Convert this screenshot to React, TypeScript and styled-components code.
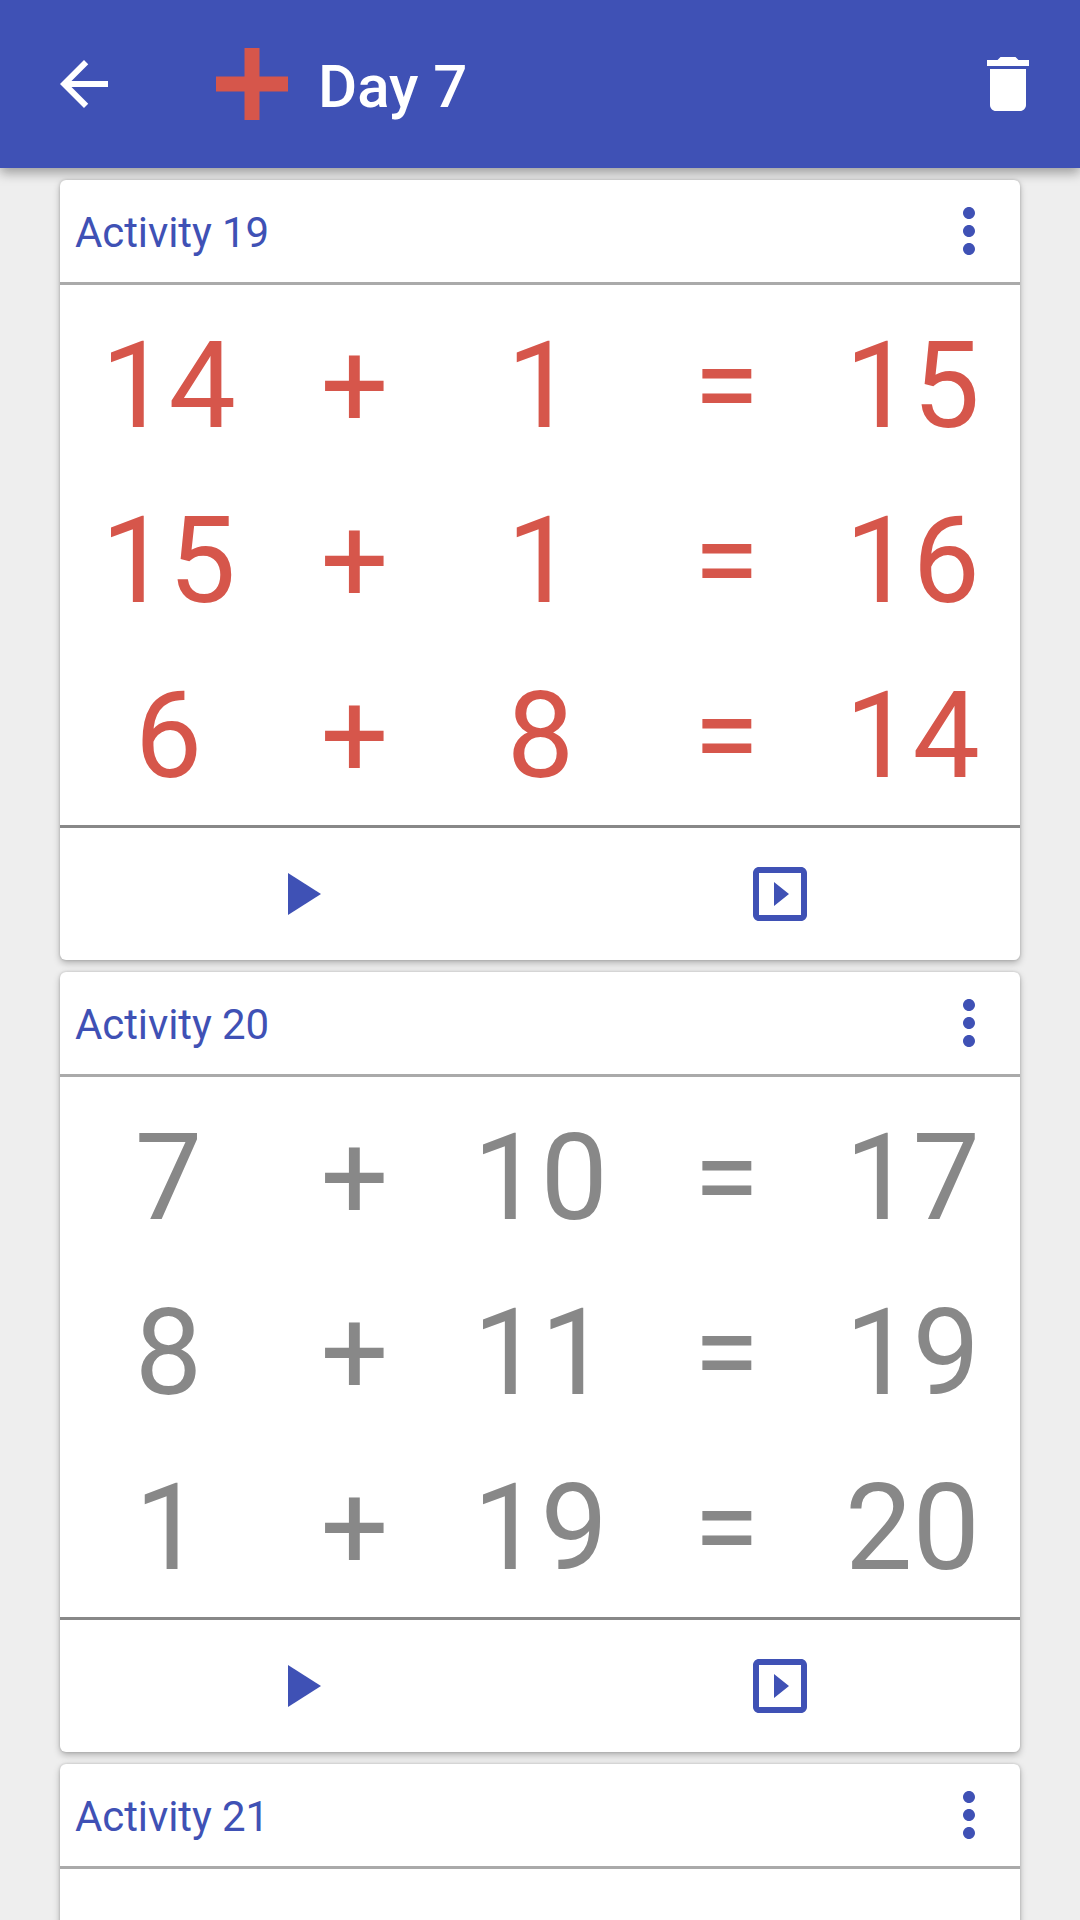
import React from "react";
import styled, { createGlobalStyle } from "styled-components";

const indigo = "#3f51b5";

const GlobalStyle = createGlobalStyle`
  *, *::before, *::after { box-sizing: border-box; }
  body {
    margin: 0;
    background: #eeeeee;
    font-family: Roboto, "Liberation Sans", sans-serif;
  }
`;

const Screen = styled.div`
  display: flex;
  flex-direction: column;
  width: 1080px;
  height: 1920px;
  overflow: hidden;
  background: #eeeeee;
`;

const AppBar = styled.header`
  flex: none;
  display: flex;
  align-items: center;
  height: 168px;
  padding: 0 36px 0 48px;
  color: #ffffff;
  background: ${indigo};
  box-shadow: 0 5px 11px rgba(0, 0, 0, 0.34);
`;

const IconButton = styled.button`
  flex: none;
  display: flex;
  padding: 0;
  border: 0;
  background: none;
  color: inherit;
`;

const Glyph = styled.svg`
  display: block;
  width: 72px;
  height: 72px;
  fill: currentColor;
`;

const PlusMark = styled(Glyph)`
  margin-left: 96px;
  color: #d6564b;
`;

const Title = styled.h1`
  flex: 1;
  margin: 0;
  padding: 6px 0 0 30px;
  font-size: 60px;
  font-weight: 500;
  line-height: 70px;
`;

const List = styled.main`
  display: flex;
  flex-direction: column;
  gap: 12px;
  padding: 12px 60px 0;
`;

const Card = styled.section`
  flex: none;
  display: flex;
  flex-direction: column;
  border-radius: 6px;
  background: #ffffff;
  box-shadow: 0 3px 7px rgba(0, 0, 0, 0.26), 0 0 3px rgba(0, 0, 0, 0.18);
`;

const CardHeader = styled.div`
  display: flex;
  align-items: center;
  justify-content: space-between;
  height: 105px;
  padding: 0 15px;
  border-bottom: 3px solid #aaaaaa;
  color: ${indigo};
`;

const CardTitle = styled.h2`
  margin: 0;
  padding-top: 3px;
  font-size: 42px;
  font-weight: 400;
  line-height: 50px;
  letter-spacing: -0.1px;
`;

const Equations = styled.div<{ $color: string }>`
  height: 543px;
  padding: 14px 14.5px 0 15.5px;
  border-bottom: 3px solid #888888;
  color: ${(p) => p.$color};
`;

const Equation = styled.div`
  display: grid;
  grid-template-columns: repeat(5, 1fr);
  height: 175px;
  font-size: 120px;
  line-height: 175px;
  text-align: center;
`;

const CardActions = styled.div`
  display: flex;
  height: 132px;
  color: ${indigo};
`;

const Action = styled(IconButton)`
  flex: 1;
  align-items: center;
  justify-content: center;
`;

type Activity = { id: number; color: string; rows: [number, number][] };

const activities: Activity[] = [
  { id: 19, color: "#d6564b", rows: [[14, 1], [15, 1], [6, 8]] },
  { id: 20, color: "#888888", rows: [[7, 10], [8, 11], [1, 19]] },
  { id: 21, color: "#888888", rows: [] },
];

function ActivityCard({ id, color, rows }: Activity) {
  return (
    <Card>
      <CardHeader>
        <CardTitle>Activity {id}</CardTitle>
        <IconButton aria-label="More">
          <Glyph viewBox="0 0 24 24">
            <path d="M12 8c1.1 0 2-.9 2-2s-.9-2-2-2-2 .9-2 2 .9 2 2 2zm0 2c-1.1 0-2 .9-2 2s.9 2 2 2 2-.9 2-2-.9-2-2-2zm0 6c-1.1 0-2 .9-2 2s.9 2 2 2 2-.9 2-2-.9-2-2-2z" />
          </Glyph>
        </IconButton>
      </CardHeader>
      <Equations $color={color}>
        {rows.map(([a, b]) => (
          <Equation key={`${a}+${b}`}>
            <span>{a}</span>
            <span>+</span>
            <span>{b}</span>
            <span>=</span>
            <span>{a + b}</span>
          </Equation>
        ))}
      </Equations>
      <CardActions>
        <Action aria-label="Play">
          <Glyph viewBox="0 0 24 24">
            <path d="M8 5v14l11-7z" />
          </Glyph>
        </Action>
        <Action aria-label="Slideshow">
          <Glyph viewBox="0 0 24 24">
            <path d="M10 8v8l5-4-5-4zm9-5H5c-1.1 0-2 .9-2 2v14c0 1.1.9 2 2 2h14c1.1 0 2-.9 2-2V5c0-1.1-.9-2-2-2zm0 16H5V5h14v14z" />
          </Glyph>
        </Action>
      </CardActions>
    </Card>
  );
}

export default function App() {
  return (
    <Screen>
      <GlobalStyle />
      <AppBar>
        <IconButton aria-label="Back">
          <Glyph viewBox="0 0 24 24">
            <path d="M20 11H7.83l5.59-5.59L12 4l-8 8 8 8 1.41-1.41L7.83 13H20v-2z" />
          </Glyph>
        </IconButton>
        <PlusMark viewBox="0 0 72 72">
          <path d="M28.5 0h15v28.5H72v15H43.5V72h-15V43.5H0v-15h28.5z" />
        </PlusMark>
        <Title>Day 7</Title>
        <IconButton aria-label="Delete">
          <Glyph viewBox="0 0 24 24">
            <path d="M6 19c0 1.1.9 2 2 2h8c1.1 0 2-.9 2-2V7H6v12zM19 4h-3.5l-1-1h-5l-1 1H5v2h14V4z" />
          </Glyph>
        </IconButton>
      </AppBar>
      <List>
        {activities.map((activity) => (
          <ActivityCard key={activity.id} {...activity} />
        ))}
      </List>
    </Screen>
  );
}
